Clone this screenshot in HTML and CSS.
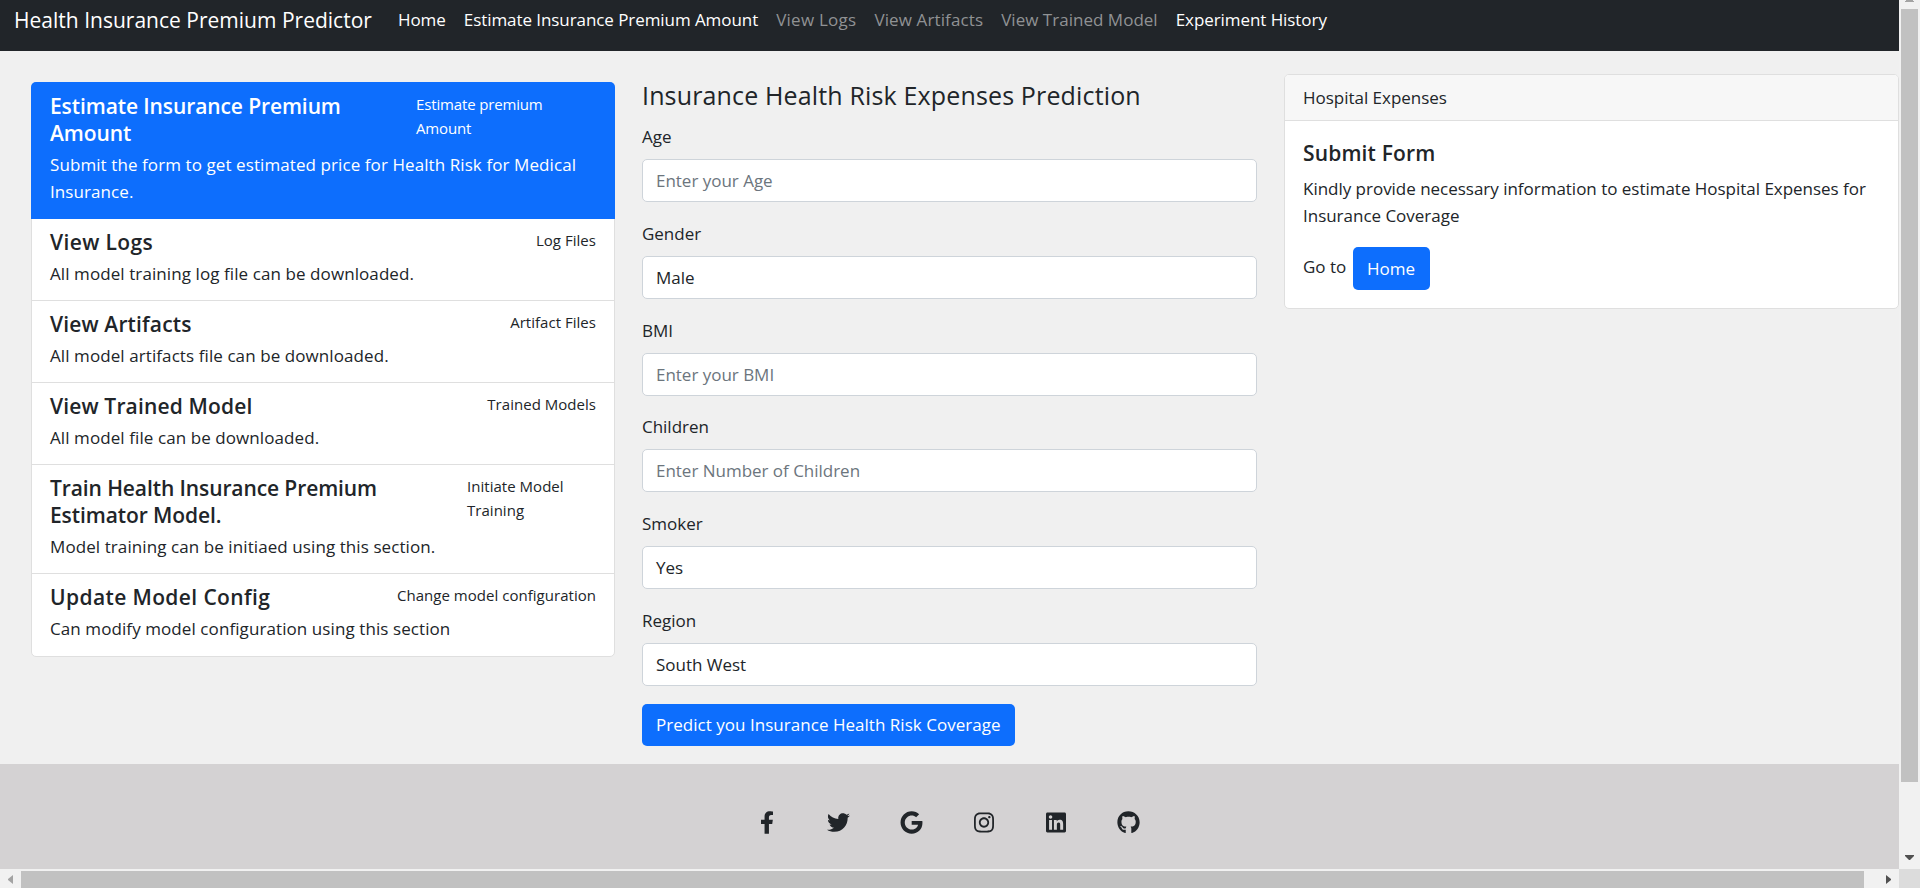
FILE: index.html
```html
<!DOCTYPE html>
<html lang="en">
<head>
<meta charset="utf-8">
<title>Health Insurance Premium Predictor</title>
<link rel="stylesheet" href="styles.css">
</head>
<body>
<div class="page">
  <nav class="navbar">
    <a class="brand">Health Insurance Premium Predictor</a>
    <a class="nav-link">Home</a>
    <a class="nav-link nav-estimate">Estimate Insurance Premium Amount</a>
    <a class="nav-link muted nav-logs">View Logs</a>
    <a class="nav-link muted nav-artifacts">View Artifacts</a>
    <a class="nav-link muted nav-model">View Trained Model</a>
    <a class="nav-link">Experiment History</a>
  </nav>
  <main class="content">
    <div class="list-group">
      <a class="item active">
        <div class="item-head"><h5>Estimate Insurance Premium<br>Amount</h5><small class="wide">Estimate premium<br>Amount</small></div>
        <p>Submit the form to get estimated price for Health Risk for Medical<br>Insurance.</p>
      </a>
      <a class="item">
        <div class="item-head"><h5 class="loose">View Logs</h5><small>Log Files</small></div>
        <p>All model training log file can be downloaded.</p>
      </a>
      <a class="item">
        <div class="item-head"><h5 class="relaxed">View Artifacts</h5><small>Artifact Files</small></div>
        <p>All model artifacts file can be downloaded.</p>
      </a>
      <a class="item">
        <div class="item-head"><h5 class="relaxed">View Trained Model</h5><small>Trained Models</small></div>
        <p>All model file can be downloaded.</p>
      </a>
      <a class="item">
        <div class="item-head"><h5>Train Health Insurance Premium<br>Estimator Model.</h5><small class="medium">Initiate Model<br>Training</small></div>
        <p>Model training can be initiaed using this section.</p>
      </a>
      <a class="item">
        <div class="item-head"><h5 class="loose">Update Model Config</h5><small>Change model configuration</small></div>
        <p>Can modify model configuration using this section</p>
      </a>
    </div>
    <div class="form">
      <h4 class="form-title">Insurance Health Risk Expenses Prediction</h4>
      <div class="group"><label>Age</label><div class="control hint">Enter your Age</div></div>
      <div class="group"><label>Gender</label><div class="control">Male</div></div>
      <div class="group"><label>BMI</label><div class="control hint">Enter your BMI</div></div>
      <div class="group"><label>Children</label><div class="control hint">Enter Number of Children</div></div>
      <div class="group"><label>Smoker</label><div class="control">Yes</div></div>
      <div class="group"><label>Region</label><div class="control">South West</div></div>
      <a class="btn predict">Predict you Insurance Health Risk Coverage</a>
    </div>
    <div class="card">
      <div class="card-header">Hospital Expenses</div>
      <div class="card-body">
        <h5>Submit Form</h5>
        <p>Kindly provide necessary information to estimate Hospital Expenses for<br>Insurance Coverage</p>
        <div class="goto"><span>Go to</span><a class="btn home">Home</a></div>
      </div>
    </div>
  </main>
  <footer class="footer">
    <svg class="icon" width="14" height="23" viewBox="0 0 320 512"><path d="M279.14 288l14.22-92.66h-88.91v-60.13c0-25.35 12.42-50.06 52.24-50.06h40.42V6.26S260.43 0 225.36 0c-73.22 0-121.08 44.38-121.08 124.72v70.62H22.89V288h81.39v224h100.17V288z"/></svg>
    <svg class="icon" width="23" height="23" viewBox="0 0 512 512"><path d="M459.37 151.716c.325 4.548.325 9.097.325 13.645 0 138.72-105.583 298.558-298.558 298.558-59.452 0-114.68-17.219-161.137-47.106 8.447.974 16.568 1.299 25.34 1.299 49.055 0 94.213-16.568 130.274-44.832-46.132-.975-84.792-31.188-98.112-72.772 6.498.974 12.995 1.624 19.818 1.624 9.421 0 18.843-1.3 27.614-3.573-48.081-9.747-84.143-51.98-84.143-102.985v-1.299c13.969 7.797 30.214 12.67 47.431 13.319-28.264-18.843-46.781-51.005-46.781-87.391 0-19.492 5.197-37.36 14.294-52.954 51.655 63.675 129.3 105.258 216.365 109.807-1.624-7.797-2.599-15.918-2.599-24.04 0-57.828 46.782-104.934 104.934-104.934 30.213 0 57.502 12.67 76.67 33.137 23.715-4.548 46.456-13.32 66.599-25.34-7.798 24.366-24.366 44.833-46.132 57.827 21.117-2.273 41.584-8.122 60.426-16.243-14.292 20.791-32.161 39.308-52.628 54.253z"/></svg>
    <svg class="icon" width="23" height="23" viewBox="0 0 488 512"><path d="M488 261.8C488 403.3 391.1 504 248 504 110.800 504 0 393.200 0 256S110.800 8 248 8c66.800 0 123 24.500 166.300 64.900l-67.500 64.900C258.500 52.600 94.300 116.600 94.300 256c0 86.500 69.100 156.600 153.700 156.600 98.200 0 135-70.400 140.800-106.900H248v-85.300h236.100c2.300 12.700 3.900 24.900 3.900 41.400z"/></svg>
    <svg class="icon" width="20" height="23" viewBox="0 0 448 512"><path d="M224.1 141c-63.600 0-114.900 51.300-114.900 114.900s51.300 114.900 114.900 114.900S339 319.500 339 255.900 287.700 141 224.100 141zm0 189.600c-41.100 0-74.700-33.500-74.700-74.700s33.500-74.700 74.700-74.700 74.700 33.500 74.700 74.700-33.600 74.700-74.700 74.700zm146.400-194.300c0 14.900-12 26.800-26.800 26.800-14.900 0-26.800-12-26.800-26.800s12-26.800 26.800-26.800 26.800 12 26.800 26.800zm76.100 27.200c-1.700-35.900-9.900-67.700-36.200-93.900-26.200-26.200-58-34.400-93.900-36.200-37-2.100-147.900-2.100-184.900 0-35.800 1.700-67.600 9.900-93.900 36.100s-34.400 58-36.200 93.900c-2.100 37-2.100 147.900 0 184.900 1.700 35.900 9.900 67.700 36.200 93.900s58 34.400 93.900 36.200c37 2.100 147.900 2.100 184.900 0 35.900-1.700 67.700-9.900 93.900-36.200 26.200-26.200 34.400-58 36.200-93.900 2.100-37 2.100-147.800 0-184.800zM398.800 388c-7.800 19.600-22.900 34.700-42.600 42.600-29.500 11.700-99.500 9-132.100 9s-102.700 2.600-132.100-9c-19.600-7.800-34.700-22.900-42.600-42.600-11.700-29.500-9-99.500-9-132.100s-2.600-102.700 9-132.100c7.800-19.600 22.900-34.700 42.600-42.600 29.500-11.700 99.500-9 132.100-9s102.700-2.600 132.100 9c19.600 7.800 34.700 22.900 42.600 42.600 11.700 29.500 9 99.500 9 132.100s2.700 102.700-9 132.100z"/></svg>
    <svg class="icon" width="20" height="23" viewBox="0 0 448 512"><path d="M416 32H31.900C14.300 32 0 46.500 0 64.300v383.400C0 465.500 14.300 480 31.900 480H416c17.600 0 32-14.500 32-32.300V64.300c0-17.800-14.400-32.300-32-32.300zM135.400 416H69V202.200h66.500V416zm-33.200-243c-21.300 0-38.500-17.300-38.500-38.500S80.900 96 102.200 96c21.200 0 38.500 17.300 38.500 38.500 0 21.300-17.200 38.500-38.500 38.500zm282.100 243h-66.400V312c0-24.800-.5-56.700-34.500-56.700-34.600 0-39.900 27-39.900 54.900V416h-66.400V202.200h63.700v29.200h.9c8.900-16.800 30.600-34.500 62.900-34.500 67.200 0 79.700 44.300 79.700 101.900V416z"/></svg>
    <svg class="icon" width="23" height="23" viewBox="0 0 496 512"><path d="M244.800 8C106.100 8 0 113.300 0 252c0 110.900 69.800 205.800 169.500 239.200 12.800 2.300 17.300-5.600 17.300-12.100 0-6.200-.3-40.400-.3-61.400 0 0-70 15-84.700-29.800 0 0-11.400-29.100-27.800-36.600 0 0-22.900-15.700 1.600-15.400 0 0 24.900 2 38.600 25.800 21.900 38.600 58.600 27.500 72.900 20.900 2.300-16 8.800-27.100 16-33.700-55.900-6.200-112.300-14.300-112.300-110.500 0-27.500 7.600-41.300 23.600-58.900-2.600-6.500-11.100-33.300 2.600-67.900 20.900-6.500 69 27 69 27 20-5.600 41.500-8.500 62.800-8.500s42.800 2.900 62.800 8.500c0 0 48.100-33.600 69-27 13.700 34.700 5.200 61.400 2.600 67.900 16 17.700 25.800 31.500 25.800 58.900 0 96.500-58.900 104.200-114.800 110.500 9.200 7.900 17 22.900 17 46.400 0 33.700-.3 75.400-.3 83.600 0 6.500 4.600 14.400 17.300 12.100C428.200 457.800 496 362.900 496 252 496 113.300 383.500 8 244.800 8z"/></svg>
  </footer>
</div>
<div class="vbar"><svg width="21" height="869"><rect x="2" y="9" width="17" height="773" fill="#c1c1c1"/><path d="M7 0h7v1h1v1H6V1h1z" fill="#a3a3a3"/><path d="M6 855h9v1l-4 4h-1l-4-4z" fill="#505050"/></svg></div>
<div class="hbar"><svg width="1899" height="19"><rect x="21" y="2" width="1843" height="17" fill="#c1c1c1"/><path d="M13 6v9l-5-4v-1z" fill="#a3a3a3"/><path d="M1886 6v9l5-4v-1z" fill="#505050"/></svg></div>
<div class="corner"></div>
</body>
</html>
```
FILE: styles.css
```css
* { box-sizing: border-box; }
body {
  margin: 0;
  display: grid;
  grid-template-columns: 1899px 21px;
  grid-template-rows: 869px 19px;
  width: 1920px;
  height: 888px;
  overflow: hidden;
  background: #f0f0f0;
  color: #212529;
  font-family: "Open Sans", "Noto Sans", sans-serif;
  font-size: 17px;
  line-height: 27px;
  letter-spacing: -0.02px;
  white-space: nowrap;
}
h4, h5, p { margin: 0; }
svg { display: block; }
.page { display: flex; flex-direction: column; overflow: hidden; }
.navbar {
  display: flex;
  height: 51px;
  padding: 6px 0 0 14px;
  background: #212529;
  color: #fff;
}
.brand { width: 384px; padding-top: 1px; font-size: 21px; letter-spacing: 0.01px; }
.nav-link { margin-right: 18px; letter-spacing: -0.07px; }
.muted { color: #909294; }
.nav-logs { letter-spacing: 0.25px; }
.nav-artifacts { letter-spacing: 0.12px; }
.nav-model { letter-spacing: 0.02px; }
.content {
  display: grid;
  grid-template-columns: 584px 615px 615px;
  column-gap: 27px;
  height: 713px;
  padding-left: 31px;
  align-items: start;
}
.list-group {
  margin-top: 31px;
  border: 1px solid #dfdfdf;
  border-radius: 5px;
  background: #fff;
}
.item {
  display: block;
  height: 82px;
  padding: 10px 18px 0;
  border-bottom: 1px solid #dfdfdf;
}
.item p { letter-spacing: 0.085px; }
.item:nth-child(5) { height: 109px; }
.item:last-child { border-bottom: 0; }
.active {
  height: 137px;
  margin: -1px -1px 0;
  padding: 11px 19px 0;
  background: #0d6efd;
  border-color: #0d6efd;
  border-radius: 5px 5px 0 0;
  color: #fff;
}
.item-head { display: flex; justify-content: space-between; margin-bottom: 3.5px; }
h5 { font-size: 21px; font-weight: 600; line-height: 27px; letter-spacing: -0.1px; }
.relaxed { letter-spacing: 0.15px; }
.loose { letter-spacing: 0.38px; }
small { font-size: 15px; line-height: 23.6px; letter-spacing: 0.03px; }
.wide { width: 180px; letter-spacing: -0.15px; }
.medium { width: 129px; }
.form { padding-top: 28px; }
.form-title { height: 44px; font-size: 25px; font-weight: 400; line-height: 32px; letter-spacing: 0.15px; }
.group { height: 96.75px; }
label { display: block; height: 36px; }
.control {
  height: 43px;
  padding: 7px 13px;
  border: 1px solid #ced4da;
  border-radius: 5px;
  background: #fff;
}
.hint { color: #6c757d; }
.btn {
  display: inline-block;
  height: 42px;
  padding: 7px 14px;
  border-radius: 5px;
  background: #0d6efd;
  color: #fff;
}
.predict { width: 373px; letter-spacing: 0.03px; }
.card {
  height: 235px;
  margin-top: 23px;
  border: 1px solid #dfdfdf;
  border-radius: 5px;
  background: #fff;
  overflow: hidden;
}
.card-header { height: 46px; padding: 9px 18px; background: #f7f7f7; border-bottom: 1px solid #dfdfdf; }
.card-body { padding: 19px 18px 18px; }
.card-body h5 { margin-bottom: 8px; letter-spacing: 0.15px; }
.card-body p { margin-bottom: 18px; }
.goto { display: flex; }
.goto span { width: 50px; padding-top: 6px; }
.home { width: 77px; height: 43px; padding-top: 8px; }
.footer {
  display: grid;
  grid-template-columns: 70px 72px 74px 72px 72px 73px;
  justify-items: center;
  height: 105px;
  padding: 47px 0 0 732px;
  background: #d4d2d3;
}
.icon { fill: #212529; }
.hbar { background: #f1f1f1; }
.vbar { background: #f1f1f1; grid-column: 2; grid-row: 1; }
.corner { background: #dcdcdc; }
```
